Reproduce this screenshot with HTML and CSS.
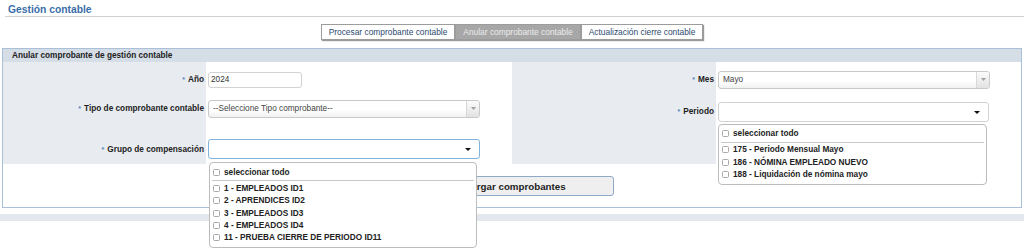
FILE: index.html
```html
<!DOCTYPE html>
<html lang="es"><head>
<meta charset="utf-8">
<title>Gestión contable</title>
<link rel="stylesheet" href="styles.css">
</head><body>

<h1 class="title">Gestión contable</h1>

<div class="tabs">
  <span class="tab">Procesar comprobante contable</span>
  <span class="tab active">Anular comprobante contable</span>
  <span class="tab">Actualización cierre contable</span>
</div>

<div class="panel">
  <div class="panel-head">Anular comprobante de gestión contable</div>

  <div class="panel-body">
    <div class="half left">
      <div class="lbl"><span class="req">*</span> Año</div>
      <div class="fld"><div class="inp year">2024</div></div>

      <div class="lbl"><span class="req">*</span> Tipo de comprobante contable</div>
      <div class="fld">
        <div class="sel">--Seleccione Tipo comprobante--<span class="sel-btn"><svg width="5" height="3" viewBox="0 0 5 3"><path d="M0 0h5L2.5 3z" fill="#a0a0a0"/></svg></span></div>
      </div>

      <div class="lbl low"><span class="req">*</span> Grupo de compensación</div>
      <div class="fld low">
        <div class="combo">
          <div class="multi focus"><svg class="caret" width="6" height="3" viewBox="0 0 6 3"><path d="M0 0h6L3 3z" fill="#111"/></svg></div>
          <div class="dd grupo">
            <div class="opt"><span class="cb"></span>seleccionar todo</div>
            <div class="sep"></div>
            <div class="opt"><span class="cb"></span>1 - EMPLEADOS ID1</div>
            <div class="opt"><span class="cb"></span>2 - APRENDICES ID2</div>
            <div class="opt"><span class="cb"></span>3 - EMPLEADOS ID3</div>
            <div class="opt"><span class="cb"></span>4 - EMPLEADOS ID4</div>
            <div class="opt"><span class="cb"></span>11 - PRUEBA CIERRE DE PERIODO ID11</div>
          </div>
        </div>
      </div>
    </div>

    <div class="half right">
      <div class="lbl"><span class="req">*</span> Mes</div>
      <div class="fld">
        <div class="sel">Mayo<span class="sel-btn"><svg width="5" height="3" viewBox="0 0 5 3"><path d="M0 0h5L2.5 3z" fill="#a0a0a0"/></svg></span></div>
      </div>

      <div class="lbl"><span class="req">*</span> Periodo</div>
      <div class="fld">
        <div class="combo">
          <div class="multi"><svg class="caret" width="6" height="3" viewBox="0 0 6 3"><path d="M0 0h6L3 3z" fill="#111"/></svg></div>
          <div class="dd periodo">
            <div class="opt"><span class="cb"></span>seleccionar todo</div>
            <div class="sep"></div>
            <div class="opt"><span class="cb"></span>175 - Periodo Mensual Mayo</div>
            <div class="opt"><span class="cb"></span>186 - NÓMINA EMPLEADO NUEVO</div>
            <div class="opt"><span class="cb"></span>188 - Liquidación de nómina mayo</div>
          </div>
        </div>
      </div>

      <div class="lbl"></div>
      <div class="fld"></div>
    </div>
  </div>

  <div class="actions"><button class="btn">Cargar comprobantes</button></div>
</div>

<div class="band"></div>

</body></html>
```

FILE: styles.css
```css
html, body {
  margin: 0; background: #fff; color: #222;
  font-family: 'Liberation Sans', Arial, sans-serif; font-size: 8.25px;
}

body { min-height: 248px; }

.title {
  margin: 0 0 0 5px; padding: 3px 0 0 3px;
  font-size: 10.3px; line-height: 13px; font-weight: bold;
  color: #3a6ea8; border-bottom: 1px solid #d0d0d0;
}

.tabs {
  display: flex; justify-content: center; margin-top: 7px;
}

.tab {
  border: 1px solid #9c9c9c; box-shadow: 1px 1px 1px #9a9a9a;
  line-height: 14px; padding: 0 7px;
  background: #fff; color: #2d4b70; font-size: 8.4px;
}

.tab.active { background: #a7a7a7; color: #ececec; }

.panel {
  margin: 8px 2px 0 2px; border: 1px solid #a9c0d8; background: #fff;
}

.panel-head {
  height: 13px; line-height: 13px; padding-left: 9px;
  background: #d5dde6; font-weight: bold;
}

.panel-body {
  display: grid; grid-template-columns: 1fr 1fr;
}

.half {
  display: grid; grid-template-columns: 203px 1fr;
}

.half.left { grid-template-rows: 35px 23px 44px; }
.half.right { grid-template-columns: 204px 1fr; grid-template-rows: 35px 29px 38px; }

.lbl {
  display: flex; align-items: center; justify-content: flex-end;
  padding-right: 2px; background: #e8ecf1; font-weight: bold;
}

.req { color: #5a86bf; font-size: 7px; margin-right: 3px; }

.fld {
  display: flex; align-items: center; padding-left: 2px;
}

.lbl.low, .fld.low { padding-top: 14px; }

.inp {
  box-sizing: border-box; height: 16px; line-height: 14px;
  border: 1px solid #d2d2d2; border-radius: 3px;
  padding-left: 2px; color: #333;
}

.inp.year { width: 94px; }

.sel {
  position: relative; box-sizing: border-box;
  width: 272px; height: 18px; line-height: 16px; padding-left: 4px;
  border: 1px solid #c9c9c9; border-radius: 3px;
  background: linear-gradient(#fff 55%, #f1f1f1); color: #444;
}

.sel-btn {
  position: absolute; top: 0; right: 0; bottom: 0; width: 12px;
  display: flex; align-items: center; justify-content: center;
  border-left: 1px solid #d8d8d8; border-radius: 0 2px 2px 0;
  background: linear-gradient(#fbfbfb, #e2e2e2);
}

.combo { position: relative; }

.multi {
  position: relative; box-sizing: border-box;
  width: 271px; height: 20px;
  border: 1px solid #d2d2d2; border-radius: 3px; background: #fff;
}

.multi.focus { width: 272px; border-color: #82b4dd; }

.caret { position: absolute; right: 8px; top: 8px; }

.dd {
  position: absolute; z-index: 5; box-sizing: border-box;
  padding: 3px 0; background: #fff;
  border: 1px solid #bcbcbc; border-radius: 4px;
}

.dd.grupo { top: 23px; left: 1px; width: 268px; }
.dd.periodo { top: 22px; left: 0; width: 269px; }

.opt {
  display: flex; align-items: center; gap: 4px;
  height: 12.3px; padding-left: 3px; font-weight: bold;
}

.cb {
  width: 5px; height: 5px; border: 1px solid #a9a9a9; border-radius: 1.5px;
}

.sep {
  height: 1px; background: #c9c9c9; margin: 2px 2px 1px 2px;
}

.actions {
  display: flex; justify-content: center; padding: 12px 0 11px 0;
}

.btn {
  box-sizing: border-box; width: 198px; height: 20px; margin-left: 6px;
  border: 1px solid #8eaac8; border-radius: 3px; background: #efefef;
  font-family: 'Liberation Sans', Arial, sans-serif;
  font-size: 9.75px; font-weight: bold; color: #222;
}

.band {
  height: 7px; margin-top: 6px; background: #e3e8ef;
}
```
